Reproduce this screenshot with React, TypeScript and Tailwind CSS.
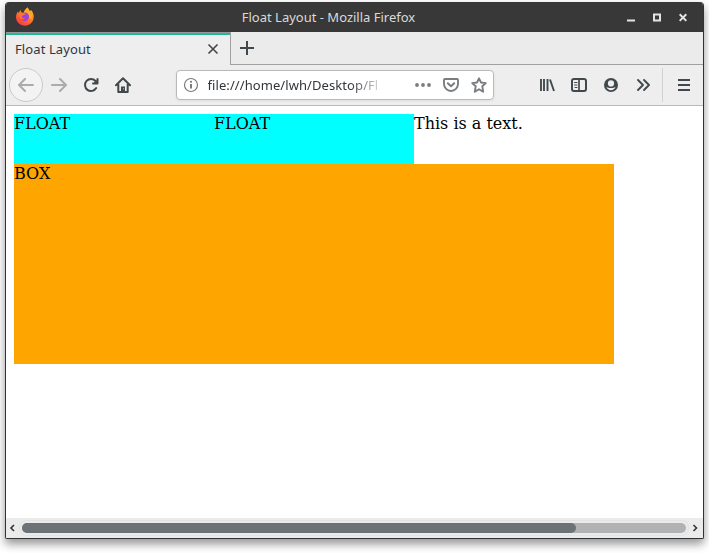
import type { ReactNode } from "react";

function Icon({ children, className = "" }: { children: ReactNode; className?: string }) {
  return (
    <svg
      viewBox="0 0 16 16"
      className={`h-4 w-4 shrink-0 ${className}`}
      fill="none"
      stroke="currentColor"
      strokeWidth="2"
      strokeLinecap="round"
      strokeLinejoin="round"
    >
      {children}
    </svg>
  );
}

function ToolButton({ children, label }: { children: ReactNode; label: string }) {
  return (
    <button aria-label={label} className="flex h-8 w-8 shrink-0 items-center justify-center">
      {children}
    </button>
  );
}

function FirefoxLogo() {
  return (
    <svg viewBox="0 0 20 20" className="h-5 w-5 shrink-0">
      <defs>
        <linearGradient id="fox" x1="0.8" y1="0.05" x2="0.2" y2="0.95">
          <stop offset="0" stopColor="#ffb52b" />
          <stop offset="0.35" stopColor="#ff8a1c" />
          <stop offset="0.7" stopColor="#ff5a32" />
          <stop offset="1" stopColor="#f53a49" />
        </linearGradient>
      </defs>
      <path
        d="M12.4 .5c1.200 1.200 2 2.500 2.300 4l1.400-1.400c1.700 2 2.800 4.400 2.600 7.200-.3 5-4 8.400-8.800 8.400-5 0-8.700-3.500-8.900-8.400C.9 8.500 1.700 6.200 3 4.600l.4 1.700L5.500 3l.9 2.500 2.100.4c.9-2.200 2-3.900 3.900-5.400Z"
        fill="url(#fox)"
      />
      <path d="M12.400 .5c-2 1.700-3.200 3.500-3.500 5.700l4.300 1.300 1.500 3.500 1.700 1.300c1.200-3.200.6-6.200-1.700-7.700-.3-1.500-1.100-3-2.300-4.100Z" fill="#ffaa26" />
      <circle cx="9.800" cy="9.700" r="4.200" fill="#9b42df" />
      <path d="M3.500 7c1.900-1.500 4.400-1.600 6.100-.7l1 .9L8.700 8l-2 1.200c.2 1.500 1.200 2.200 3.300 2-1.300 2.100-5.500 1.500-6.500-4.200Z" fill="#ff7428" />
    </svg>
  );
}

function TitleBar() {
  return (
    <header className="relative flex h-[30px] shrink-0 items-center justify-between bg-[#383838] pr-3 pb-px pl-[9px]">
      <FirefoxLogo />
      <h1 className="absolute inset-x-0 top-[6px] mr-[52px] text-center text-[13px] leading-[18px] text-[#dadada]">
        Float Layout - Mozilla Firefox
      </h1>
      <div className="flex text-[#e4e4e4]">
        <svg viewBox="0 0 26 16" className="h-4 w-[26px]"><path d="M9 11.500h8" stroke="currentColor" strokeWidth="2" /></svg>
        <svg viewBox="0 0 26 16" className="h-4 w-[26px]"><path d="M10 5.500h6v6h-6z" fill="none" stroke="currentColor" strokeWidth="2" /></svg>
        <svg viewBox="0 0 26 16" className="-mr-[5px] h-4 w-[26px]"><path d="m9.700 5.300 6.600 6.600m0-6.600-6.600 6.600" stroke="currentColor" strokeWidth="2" /></svg>
      </div>
    </header>
  );
}

function TabStrip() {
  return (
    <div className="flex h-[33px] shrink-0 bg-[#ebebeb] text-[#42474a]">
      <div className="flex w-[224px] items-center justify-between border-t border-[#989898] bg-[#eeeeee] shadow-[inset_0_2px_0_#1abc9c]">
        <span className="pl-[9px] text-[13px] leading-[18px] tracking-[0.1px] text-[#31363b]">Float Layout</span>
        <svg viewBox="0 0 16 16" className="mr-[9px] h-4 w-4" fill="none" stroke="currentColor" strokeWidth="1.600">
          <path d="m3.500 3.500 9 9m0-9-9 9" />
        </svg>
      </div>
      <div className="flex flex-1 border-b border-l border-[#a0a0a0] pl-2">
        <svg viewBox="0 0 16 16" className="mt-2 h-4 w-4" fill="none" stroke="currentColor" strokeWidth="2">
          <path d="M8 1v14M1 8h14" />
        </svg>
      </div>
    </div>
  );
}

function AddressBar() {
  return (
    <div className="flex h-[30px] w-[318px] shrink-0 items-center rounded-[4px] border border-[#b9b9b9] bg-white pr-[6px] pl-[6px] text-[#797d80] shadow-[0_1px_3px_rgba(0,0,0,0.07)]">
      <Icon>
        <circle cx="8" cy="8" r="6.500" strokeWidth="1.200" />
        <path d="M8 7v4.500" strokeWidth="2" strokeLinecap="butt" />
        <circle cx="8" cy="4.800" r="1.100" fill="currentColor" stroke="none" />
      </Icon>
      <div className="ml-[8.500px] w-[172px] overflow-hidden text-[13px] leading-[18px] tracking-[0.08px] whitespace-nowrap text-[#31363b] [mask-image:linear-gradient(to_right,black_142px,transparent_178px)]">
        file:///home/lwh/Desktop/Fl
      </div>
      <div className="ml-auto flex gap-3">
        <Icon>
          <g fill="currentColor" stroke="none"><circle cx="2" cy="8" r="1.900" /><circle cx="8" cy="8" r="1.900" /><circle cx="14" cy="8" r="1.900" /></g>
        </Icon>
        <Icon>
          <path d="M2 2h12a1 1 0 0 1 1 1v4a7 7 0 0 1-14 0V3a1 1 0 0 1 1-1Z" strokeWidth="1.900" />
          <path d="m4.800 6.200 3.200 3 3.200-3" />
        </Icon>
        <Icon>
          <path d="m8 1.300 2 4.200 4.800.6-3.500 3.200.9 5.400L8 12.200l-4.200 2.500.9-5.400-3.500-3.200 4.800-.6Z" strokeWidth="1.900" />
        </Icon>
      </div>
    </div>
  );
}

function Toolbar() {
  return (
    <nav className="flex h-[41px] shrink-0 items-center border-b border-[#b9b9b9] bg-[#eeeeee] text-[#42494d]">
      <button aria-label="Back" className="ml-[3px] flex h-[34px] w-[34px] shrink-0 items-center justify-center rounded-full border border-[#cacaca] bg-[#f3f3f3] text-[#ababab]">
        <Icon><path d="M15 8H1.500M7 2 1 8l6 6" /></Icon>
      </button>
      <div className="flex text-[#ababab]">
        <ToolButton label="Forward"><Icon><path d="M1 8h13.500M9 2l6 6-6 6" /></Icon></ToolButton>
      </div>
      <ToolButton label="Reload">
        <Icon>
          <path d="M12.500 4A6 6 0 1 0 13.200 11" />
          <path d="M14.500 2v4.500H10" />
          <path d="M15 2v5H9.500Z" fill="currentColor" stroke="none" />
        </Icon>
      </ToolButton>
      <ToolButton label="Home">
        <Icon>
          <path d="M1 8.300 8 1.300l7 7M3.300 7v8h9.400V7" />
          <path d="M6 14v-4.500h4V14Z" fill="currentColor" stroke="none" />
          <path d="M8.600 11.800v.1" stroke="#eeeeee" strokeWidth="1" />
        </Icon>
      </ToolButton>
      <div className="ml-[37px]"><AddressBar /></div>
      <div className="ml-[37px] flex">
        <ToolButton label="Library">
          <Icon><path d="M2 2v12M5 2v12M8.500 2v12M11 2.500 15 14" strokeLinecap="butt" strokeWidth="1.900" /></Icon>
        </ToolButton>
        <ToolButton label="Sidebars">
          <Icon>
            <rect x="1" y="2" width="14" height="12" rx="2" />
            <path d="M8 2v12" strokeWidth="1.700" />
            <path d="M3.500 5.500h2.500M3.500 8h2.500M4 10.500h2" strokeWidth="1" />
          </Icon>
        </ToolButton>
        <ToolButton label="Account">
          <Icon>
            <circle cx="8" cy="8" r="7" fill="currentColor" stroke="none" />
            <circle cx="8" cy="6.400" r="3.100" fill="#eeeeee" stroke="none" />
            <path d="M3.500 10.300c1.200-.3 1.700.8 4.500.8s3.300-1.100 4.500-.8c-.8 1.700-2.500 2.900-4.500 2.900s-3.700-1.200-4.500-2.900Z" fill="#eeeeee" stroke="none" />
          </Icon>
        </ToolButton>
        <ToolButton label="More tools"><Icon><path d="m3 3 5 5-5 5m6-10 5 5-5 5" strokeWidth="1.900" /></Icon></ToolButton>
      </div>
      <div className="ml-[3px] h-[34px] w-px bg-[#d2d2d2]" />
      <div className="ml-[5px]">
        <ToolButton label="Menu"><Icon><path d="M2 3h12M2 8h12M2 13h12" strokeLinecap="butt" /></Icon></ToolButton>
      </div>
    </nav>
  );
}

function PageContent() {
  return (
    <main className="flex-1 overflow-hidden bg-white p-2 font-['DejaVu_Serif',serif] text-[16px] leading-[19px] text-black">
      <div className="flex">
        <div className="h-[50px] w-[200px] bg-[#00ffff]">FLOAT</div>
        <div className="h-[50px] w-[200px] bg-[#00ffff]">FLOAT</div>
        <p>This is a text.</p>
      </div>
      <div className="h-[200px] w-[600px] bg-[#ffa500]">BOX</div>
    </main>
  );
}

function HorizontalScrollbar() {
  return (
    <div className="flex h-5 shrink-0 items-center bg-[#ebebeb] text-[#31363b]">
      <svg viewBox="0 0 13 12" className="h-3 w-[13px]" fill="none" stroke="currentColor" strokeWidth="1.600"><path d="M8 3 5 6l3 3" /></svg>
      <div className="ml-[3px] h-[10px] w-[664px] rounded-full bg-[#b0b2b3] shadow-[0_0_0_2px_#ebebeb,0_0_0_3px_#e3e4e2]">
        <div className="h-full w-[554px] rounded-full bg-[#6d7276]" />
      </div>
      <svg viewBox="0 0 13 12" className="ml-[3px] h-3 w-[13px]" fill="none" stroke="currentColor" strokeWidth="1.600"><path d="M4.500 3l3 3-3 3" /></svg>
    </div>
  );
}

export default function App() {
  return (
    <div className="h-[553px] w-[709px] overflow-hidden bg-white pt-[2px] pl-[5px] font-['Noto_Sans',sans-serif]">
      <div className="flex h-[537px] w-[699px] flex-col overflow-hidden rounded-t-[4px] rounded-b-[2px] border border-t-0 border-[#303236] bg-white shadow-[0_5px_10px_rgba(0,0,0,0.42)]">
        <TitleBar />
        <TabStrip />
        <Toolbar />
        <PageContent />
        <HorizontalScrollbar />
      </div>
    </div>
  );
}
